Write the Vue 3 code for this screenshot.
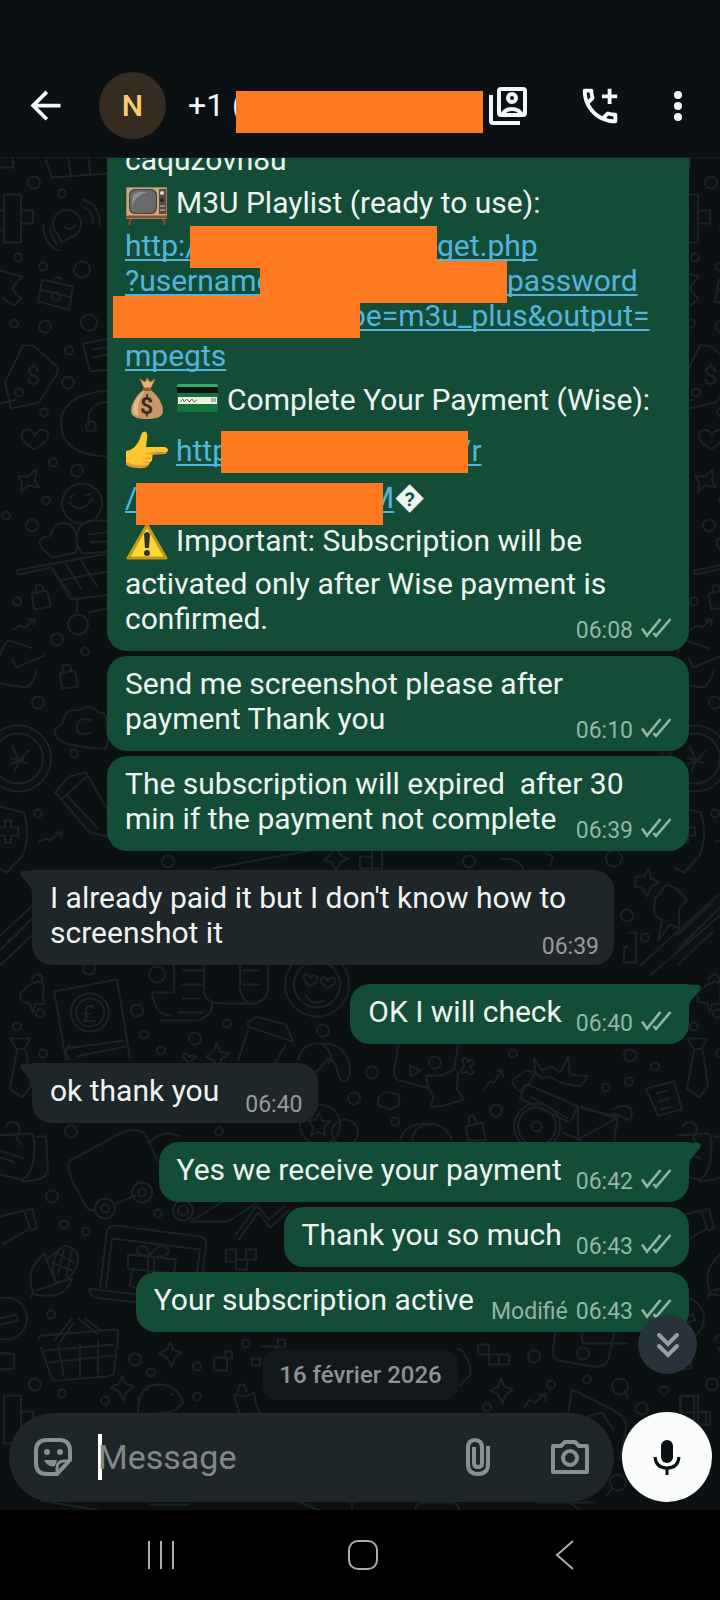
<template>
  <div class="app">
    <header class="topbar">
      <button class="icon-btn back" type="button" aria-label="Retour">
        <svg width="45" height="45" viewBox="0 0 24 24" fill="currentColor">
          <path d="M20 11H7.8l5.6-5.6L12 4l-8 8 8 8 1.4-1.4L7.8 13H20z" />
        </svg>
      </button>
      <div class="avatar">N</div>
      <div class="contact">
        <span class="contact-name" :style="{ width: '48px' }">+1 (</span>
        <span class="redact low"></span>
      </div>
      <div class="actions">
        <button class="icon-btn" type="button" aria-label="Contact">
          <svg width="46" height="46" viewBox="0 0 46 46" fill="none" stroke="currentColor" stroke-width="4">
            <rect x="14" y="6" width="26" height="26" rx="2" />
            <path d="M6 12v26q0 2 2 2h27" />
            <circle cx="27" cy="15" r="4" />
            <path d="M17 32q3-6 10-6t10 6" />
          </svg>
        </button>
        <button class="icon-btn" type="button" aria-label="Appeler">
          <svg width="46" height="46" viewBox="0 0 24 24" fill="currentColor">
            <path d="M6.54 5c.06.89.21 1.76.45 2.59l-1.2 1.2c-.41-1.2-.67-2.47-.76-3.79h1.51m9.86 12.02c.85.24 1.72.39 2.6.45v1.49c-1.32-.09-2.59-.35-3.8-.75l1.2-1.19M7.5 3H4c-.55 0-1 .45-1 1 0 9.39 7.61 17 17 17 .55 0 1-.45 1-1v-3.49c0-.55-.45-1-1-1-1.24 0-2.45-.2-3.57-.57-.1-.04-.21-.05-.31-.05-.26 0-.51.1-.71.29l-2.2 2.2c-2.83-1.45-5.15-3.76-6.59-6.59l2.2-2.2c.28-.28.36-.67.25-1.02C8.7 6.45 8.5 5.25 8.5 4c0-.55-.45-1-1-1z" />
            <path d="M16 3h2v3h3v2h-3v3h-2V8h-3V6h3z" />
          </svg>
        </button>
        <button class="icon-btn" type="button" aria-label="Menu">
          <svg width="18" height="46" viewBox="0 0 18 46" fill="currentColor">
            <circle cx="9" cy="12" r="4" />
            <circle cx="9" cy="23" r="4" />
            <circle cx="9" cy="34" r="4" />
          </svg>
        </button>
      </div>
    </header>

    <div class="chat">
      <svg class="wallpaper" viewBox="0 157 720 1353" preserveAspectRatio="xMidYMid slice" aria-hidden="true">
        <g id="doodles">
          <path d="M45 157l7 20 56-4M68 157l3 19M88 157l3 18M0 167h13v-10" />
          <path d="M4 194h17v48H4zM21 210h12v13H21zM4 230h-8M4 210h-8" />
          <path d="M61 242l-3-8a14 14 0 1 1 12 3zM43 224q2 24 18 26M50 226q2 14 8 19M82 199q18 4 18 26M84 207q9 4 9 16M64 226q6 6 12-2" />
          <path d="M42 279l31 7-4 23-31-8zM40 289l31 8M53 280q2-6 9-1" />
          <circle cx="56" cy="296" r="4" />
          <path d="M0 270l22 6-10 12 9 10-7 7-12-8" />
          <path d="M23 345l10 0 25 22-1 6-18 29-28 6-6-26zM0 403l17-4" />
          <circle cx="19" cy="392" r="4" />
          <path d="M110 338l-27 5 7 28 20-2M92 349l14-2M93 357l14-3M108 390q-48 4-47 34t45 32M110 401q-26 2-21 24" />
          <circle cx="91" cy="426" r="5" />
          <path d="M34 449q-18-12-10-19 7-3 11 5 5-9 12-4 6 6-13 18z" />
          <path d="M18 476l10 0 8-7-1 11 4 7-11-2-7 6 1-9z" />
          <circle cx="82" cy="503" r="20" />
          <path d="M69 501q10 15 24-3M70 498l4-4M84 495l8-2" />
          <path d="M53 557q-26-18-2-22 2-15 17-12 12 6 8 29zM110 520h-20q-16 4-13 24l5 9 28-2M88 534l18-2M90 542l17-1" />
          <path d="M16 570l92-17M16 570l2 4 33-7 20 32 40-5M51 567l20 27M65 562l17 27M81 560l16 26M58 580l50-9M77 600v13M88 612l22-5" />
          <circle cx="78" cy="624" r="10" />
          <path d="M32 593l15-3 4 16-17 3zM36 592q-2-7 3-8 5 1 4 6M12 630l8-5 5 2 9-8M28 619h7l-1 6" />
          <path d="M33 648l-24-8q-6 3-9 15M45 655l-29 12-4-9M0 683l25 4q7-1 12-17" />
          <path d="M60 673l15-3 3 16-16 2zM63 672q-2-8 4-8 5 1 4 6" />
          <path d="M63 742q-16-10 0-20 2-16 16-12 10-8 20 2 8 0 7 8l2 20-2 8q-22 0-43-6zM92 720q-14-5-15 6t14 6" />
          <circle cx="18" cy="758" r="33" />
          <circle cx="18" cy="758" r="25" />
          <path d="M12 745l7 15 11-11M19 760l-5 12M10 757l18 6M10 764l14-6" />
          <path d="M55 792l14-16 17-4 22 38v26l-18-4zM60 800l28-25M66 794l32 34" />
          <path d="M0 806l24 6q7 24-2 44l-15 16-10-5M0 827h5v-7h6v7h7v8h-7v7H5v-7H0" />
          <path d="M38 842l8-4 4 2 10-8M55 832h7l-1 6" />
          <path d="M82 871l10 7M75 900v-12l14 3" />
          <circle cx="34" cy="182" r="6" />
          <circle cx="62" cy="193" r="4" />
          <circle cx="18" cy="257" r="4" />
          <circle cx="43" cy="266" r="4" />
          <circle cx="82" cy="269" r="8" />
          <circle cx="14" cy="323" r="4" />
          <circle cx="45" cy="326" r="6" />
          <circle cx="89" cy="322" r="8" />
          <circle cx="69" cy="350" r="4" />
          <circle cx="68" cy="382" r="6" />
          <circle cx="44" cy="412" r="4" />
          <circle cx="77" cy="470" r="6" />
          <circle cx="53" cy="462" r="4" />
          <circle cx="46" cy="500" r="4" />
          <circle cx="32" cy="525" r="6" />
          <circle cx="6" cy="515" r="4" />
          <circle cx="17" cy="601" r="4" />
          <circle cx="57" cy="639" r="6" />
          <circle cx="85" cy="651" r="4" />
          <circle cx="38" cy="702" r="6" />
          <circle cx="74" cy="753" r="4" />
          <circle cx="38" cy="813" r="4" />
          <path d="M0 935l35-32M0 950l80-80M0 965l36-34M8 938l2 4M14 932l3 4M20 926l3 4" />
          <path d="M20 993l10-9 8-3 6 3-1 12 1 7-9 1-2 8-3-9-9-2zM32 981q0-8 8-7 4 4 1 9" />
          <path d="M10 1038h20l-5 10-8 1zM17 1050l-7 38 12 9 9-11-5-36" />
          <path d="M54 991l63-12 13 79M54 991q0-3 12 69M66 1048l58-8M70 1060q-8-8 0-16M76 1056l50-10" />
          <circle cx="90" cy="1012" r="19" />
          <circle cx="90" cy="1012" r="14" />
          <path d="M152 992h22v-28M152 992q4 26 20 22M160 1020h38q16-6 14-18M182 970h22M182 984h20M182 998h18M178 1012h26M204 964v28q2 11 20 11h30q14-4 14-14v-25M240 964v24q2 14 14 16M242 970h18M242 984h18" />
          <circle cx="317" cy="984" r="32" />
          <circle cx="317" cy="984" r="23" />
          <path d="M310 986q-10-9-5-12 4-1 5 4 3-5 7-2 2 4-7 10zM328 988q-10-6-6-11 4-1 6 4 3-6 7-3 2 5-7 10zM305 994q6 12 20 6" />
          <path d="M248 1022l8-6 30 8 7 17-45-15zM248 1030l-10 30M286 1044l-12 20" />
          <path d="M216 1042l4 9 9 2-8 6-2 10-5-9-8-4 8-5zM188 1062q-8-8-3-9 4 0 4 4 4-4 7 0z" />
          <path d="M298 1060q4-18 22-17 30-2 30 31-6 14-12 0-2-14-10-16l-12 14-16-5M322 1043q14 12 6 20" />
          <circle cx="89" cy="968" r="6" />
          <circle cx="157" cy="974" r="8" />
          <circle cx="137" cy="1010" r="6" />
          <circle cx="40" cy="1013" r="4" />
          <circle cx="17" cy="1026" r="4" />
          <circle cx="144" cy="1034" r="4" />
          <circle cx="195" cy="1038" r="6" />
          <circle cx="161" cy="1050" r="4" />
          <circle cx="227" cy="1023" r="4" />
          <circle cx="323" cy="1030" r="6" />
          <circle cx="43" cy="1053" r="4" />
          <path d="M0 1135l30-2q6 0 4 22-2 20-12 24l-22-5M36 1136l10 0 2 36q-4 8-26 9M0 1150l24 8M0 1157l15 5M5 1127q4-8 12-4 6 6-1 14l6 8" />
          <path d="M70 1160l50-27q18-8 26 2l12 26M70 1160q-4 4 2 20l14 26q4 6 10 2M116 1203l20-8M150 1142q12-14 30-6" />
          <circle cx="105" cy="1208" r="10" />
          <circle cx="105" cy="1208" r="4" />
          <circle cx="142" cy="1192" r="10" />
          <circle cx="142" cy="1192" r="4" />
          <circle cx="183" cy="1210" r="10" />
          <circle cx="183" cy="1210" r="5" />
          <path d="M190 1221h38l28-18M238 1240l20-28 12 15 20-18M235 1235l22-30 12 14 16-14M192 1220l36-22" />
          <path d="M100 1288l7-58q2-5 8-5l86 11q6 2 5 8l-4 36M106 1288l6-50 88 11-4 30M88 1288l50 6M88 1288l5 9 45 5M128 1254l48 5-2 14-46-5zM132 1269l-2 16 10 4M148 1256v20M154 1257v18M150 1255q-16 0-12-8 8-5 12 8 8-14 18-7 4 8-12 8" />
          <path d="M34 1294q-8-20 2-32l8-9 12 29 16-4q-6 22-36 16zM30 1298l4-8M56 1282q-8-22 6-36M36 1290l36-12M48 1258l16-13q14 2 14 14-2 14-12 20M52 1262l20 8M56 1252l18 10M64 1248l-6 26M72 1250l-6 26" />
          <path d="M38 1340q0-5 5-5l71-6q5 0 4 6l-4 36q-1 4-7 5l-50 4q-4 0-6-4l-10-30M44 1350l70-6M48 1362l66-7M58 1344l6 32M80 1342v36M98 1340v34M54 1340l18-22M60 1342l14-20M78 1318l20 16M84 1317l18 14" />
          <circle cx="6" cy="1318" r="21" />
          <path d="M0 1318l16-4 2 6-18 4M0 1352l14 2v14l-14 1M0 1216l24-6 6 18-28 16M26 1210l6-2 5 20-6 2" />
          <path d="M170 1341l3 8 9 3-8 6-2 8-5-9-8-4 8-4zM122 1375l3 8 9 3-8 6-2 8-5-9-8-4 8-4z" />
          <path d="M226 1249h10v12h-10zM246 1249h10v10h-10zM236 1259h11v10h-11zM214 1357h13v13h-13zM225 1351h7v7h-7zM252 1358h8v7h-8zM260 1346h16v12M278 1339h7v8h-7z" />
          <path d="M4 1395h17v48H4zM21 1411h12v13H21z" />
          <path d="M138 1412q0-30 24-28 16 2 21 18-8 12-24 10M170 1394h4M141 1400l-4-4M148 1390l-2-5" />
          <path d="M234 1394l12 2 8-4 2 12 4 8-20 4zM238 1392q0-10 6-8l3 8" />
          <circle cx="71" cy="1131" r="6" />
          <circle cx="219" cy="1131" r="4" />
          <circle cx="52" cy="1196" r="6" />
          <circle cx="64" cy="1224" r="4" />
          <circle cx="86" cy="1231" r="4" />
          <circle cx="158" cy="1213" r="4" />
          <circle cx="51" cy="1314" r="4" />
          <circle cx="135" cy="1359" r="6" />
          <circle cx="151" cy="1372" r="4" />
          <circle cx="197" cy="1366" r="4" />
          <circle cx="246" cy="1343" r="4" />
          <circle cx="35" cy="1384" r="6" />
          <circle cx="62" cy="1393" r="4" />
          <circle cx="105" cy="1400" r="4" />
          <circle cx="197" cy="1396" r="4" />
        </g>
        <text x="26" y="384" font-size="26">$</text>
        <text x="82" y="1021" font-size="24">£</text>
        <use href="#doodles" x="677" />
        <text x="703" y="384" font-size="26">$</text>
        <path d="M208 944l64-34 60 8M212 868l98-18M330 854l6-8 4 8 8 4-8 4-4 8-4-8-8-2zM360 856h12v12h-12zM372 846h10v22h-10zM500 858q20 0 24 12M545 852l8 4-3 10M636 876l8 0 5-8 2 10 8 4-8 4-4 10-4-8-8-2z" />
        <path d="M655 898l12-14 10 4 10 12-8 8 0 20-9-4-12 16 4-20-8-6z" />
        <path d="M640 965l80-72M650 975l70-60M628 932h8v30h-12v-16h4" />
        <path d="M398 1045l-4 26q0 8 6 9l30 8M458 1045l-4 24-12 6-16 0 2 12 6 8-4 12 14-2 20-6-7-10 1-18M410 1065l10 5-9 6z" />
        <path d="M462 1059q4-4 6 2 6-4 6 2l-4 3 4 6q-4 4-7-1-4 4-6-1l3-5zM484 1089l6-8 4 1 8-13M496 1071l6-2 1 8" />
        <path d="M378 1097l8-6 12 3 2 10-10 5-12-4zM400 1140q4-18 30-17 18 2 22 17M412 1140q2-16 20-16" />
        <path d="M512 1080l14-10 10 2-8 12-8 7q-6-4-8-11zM528 1084l50 22-8 16-50-24 4-12zM535 1072l-1-14 8 12 10-4 8 6 8-16 2 18 18 2-8 10-20-4-10-6-8 2z" />
        <path d="M530 1096l38 22M580 1106l36 12-36 20M578 1106v34M582 1108l36 8-4 24M612 1110l6-4q14-2 14 6l-2 8-18-8M562 1132l20 8" />
        <circle cx="537" cy="1126" r="23" />
        <circle cx="537" cy="1126" r="19" />
        <circle cx="537" cy="1126" r="5" />
        <path d="M646 1088l28-7 8 28-24 6zM656 1093l12-3M658 1101l12-3M660 1109l12-3M466 1126l16-4 4 18h-18zM470 1124q-4-10 4-8l3 7" />
        <circle cx="320" cy="1124" r="20" />
        <circle cx="345" cy="1132" r="13" />
        <path d="M319 1112l3 8 8 1-6 6 1 8-7-4-7 4 2-9-5-6 8-1z" />
        <path d="M478 1344h11v10h-11zM489 1354h10v10h-10zM499 1354h10v10h-10zM457 1348q6 0 12 14l2 12-12 12M555 1333l-2 18q0 8 6 9l34 6q14 2 16-10l5-23M582 1333v6q0 4 6 4h40" />
        <path d="M501 1378l3 8 9 3-8 6-2 8-5-9-8-4 8-4zM524 1407l6-8 5 3 10-9M538 1394h8l-1 7M568 1414l4-25 40 20q16 8 14 20l-6 30M580 1418l22-6 12 18M624 1390l4 8M680 1396h14v16h-14zM694 1412h12v12h-12z" />
        <circle cx="583" cy="1353" r="6" />
        <circle cx="534" cy="1356" r="6" />
        <circle cx="551" cy="1384" r="4" />
        <circle cx="587" cy="1379" r="4" />
        <circle cx="620" cy="1386" r="8" />
        <circle cx="664" cy="1390" r="4" />
        <circle cx="642" cy="1408" r="6" />
        <circle cx="487" cy="1407" r="4" />
        <circle cx="435" cy="1062" r="6" />
        <circle cx="372" cy="1072" r="6" />
        <circle cx="354" cy="1098" r="6" />
        <circle cx="513" cy="1053" r="4" />
        <circle cx="496" cy="1110" r="6" />
        <circle cx="395" cy="1121" r="4" />
        <circle cx="630" cy="1055" r="6" />
        <circle cx="606" cy="1087" r="4" />
        <circle cx="629" cy="1081" r="4" />
        <circle cx="655" cy="1066" r="4" />
        <circle cx="614" cy="858" r="8" />
        <circle cx="627" cy="915" r="6" />
        <circle cx="645" cy="937" r="4" />
        <circle cx="168" cy="861" r="6" />
        <circle cx="469" cy="861" r="6" />
        <circle cx="618" cy="1482" r="8" />
        <path d="M612 1488l-6 8M570 1502l10 8M536 1502h60M40 1500l60 10M150 1504h40M300 1502l20 8M352 1500v10M415 1510q0-8 10-8h26q8 0 8 8" />
      </svg>

      <main class="messages">
        <article
          v-for="msg in messages"
          :key="msg.id"
          class="bubble"
          :class="[msg.from, { wide: msg.wide, first: msg.tail, edited: msg.edited }]"
        >
          <svg v-if="msg.tail" class="tail" width="13" height="24" viewBox="0 0 14 24" fill="currentColor">
            <path d="M0 0h10q4 1 2 5L3 16Q0 19 0 24z" />
          </svg>
          <div v-for="(line, i) in msg.lines" :key="i" class="line" :class="line.size">
            <template v-for="(part, j) in line.parts" :key="j">
              <span v-if="part.redact" class="redact" :class="{ low: part.low }" :style="{ marginLeft: part.shift + 'px' }"></span>
              <a v-else-if="part.link" href="#" class="link" :style="linkStyle(part)">{{ part.link }}</a>
              <svg v-else-if="part.emoji" class="emoji" width="44" height="44" viewBox="0 0 44 44" role="img" :aria-label="part.emoji">
                <template v-if="part.emoji === 'tv'">
                  <path d="M6 37l-2 7M38 37l2 7" stroke="#8a4b32" stroke-width="2" />
                  <rect x="1" y="6" width="41" height="32" rx="1" fill="#a87b58" />
                  <rect x="2" y="7" width="39" height="27" fill="#c9a982" />
                  <rect x="4" y="8" width="28" height="25" rx="6" fill="#3e4242" />
                  <rect x="5" y="9" width="26" height="23" rx="6" fill="#686b6a" />
                  <path d="M7 20q0-9 9-9h6q-11 3-15 14z" fill="#8f918f" />
                  <rect x="34" y="8" width="7" height="25" fill="#594c40" />
                  <circle cx="37" cy="12" r="2" fill="#ddd" />
                  <circle cx="37" cy="19" r="2" fill="#222" />
                  <path d="M35 25h5M35 29h5" stroke="#d7c6ac" />
                  <path d="M1 36h41" stroke="#8b4f30" stroke-width="2" />
                </template>
                <template v-else-if="part.emoji === 'money'">
                  <path d="M15 2l5 3 2-4 3 4 5-3-4 9h-7z" fill="#e2b578" stroke="#9a6634" />
                  <path d="M19 12h6q13 11 13 22 0 8-16 8T6 34q0-11 13-22z" fill="#c99665" />
                  <path d="M18 14q-10 9-10 20 0 4 5 5-2-14 7-25z" fill="#e3b98a" />
                  <path d="M18 11h8v3h-8z" fill="#8e5c33" />
                  <text x="15" y="37" font-size="23" font-weight="700" fill="#3b2b20">$</text>
                </template>
                <template v-else-if="part.emoji === 'card'">
                  <rect x="1" y="7" width="41" height="28" rx="2" fill="#14723f" />
                  <path d="M1 9q0-2 2-2h37q2 0 2 2v2H1z" fill="#3da66b" />
                  <path d="M1 10h41v6H1z" fill="#06180f" />
                  <path d="M2 20h39v7H2z" fill="#edf0df" />
                  <path d="M4 25l3-3 1 3 3-3 2 3 3-3 2 3 3-2M35 22h5M35 24h5" fill="none" stroke="#6f716b" />
                </template>
                <template v-else-if="part.emoji === 'hand'">
                  <path d="M1 22q7-1 11-7 3-4 4-9 2-5 5-3 2 2 1 7l-1 8h19q3 1 3 3t-3 2l-14 1q3 2 1 5 1 3-2 4-1 5-6 5-10 1-18-3z" fill="#fdc72f" />
                  <path d="M26 24l14-1q2 0 2-2 1 4-3 4l-13 1zM19 29q4 1 7 0M18 33q4 1 6 0M1 33q10 4 18 3 3 0 4-2 0 5-5 5-10 1-17-3z" fill="#e8942c" />
                  <path d="M20 24q3 1 6 0M19 29q4 1 7 0M18 33q4 1 6 0" fill="none" stroke="#e8942c" />
                </template>
                <template v-else>
                  <path d="M22 6l19 33H3z" fill="#fdd835" stroke="#c29817" stroke-width="3" stroke-linejoin="round" />
                  <path d="M19 15q3-4 6 0l-1 14h-4z" fill="#333025" />
                  <circle cx="22" cy="34" r="3" fill="#333025" />
                </template>
              </svg>
              <span v-else class="text">{{ part.text }}</span>
            </template>
            <span v-if="i === msg.lines.length - 1" class="meta">
              <span v-if="msg.edited">Modifié</span>
              <time>{{ msg.time }}</time>
              <svg v-if="msg.from === 'out'" class="ticks" width="31" height="20" viewBox="0 0 31 20" fill="none" stroke="currentColor" stroke-width="2.6">
                <path d="M1 10.5l5 7L19.5 1M12.5 15l2.5 3L29.5 1" />
              </svg>
            </span>
          </div>
        </article>
        <div class="date-chip">16 février 2026</div>
        <button class="scroll-down" type="button" aria-label="Aller en bas">
          <svg width="30" height="30" viewBox="0 0 30 30" fill="none" stroke="currentColor" stroke-width="4" stroke-linecap="round">
            <path d="M6 5l9 9 9-9M6 16l9 9 9-9" />
          </svg>
        </button>
      </main>

      <form class="composer" @submit.prevent>
        <div class="field">
          <button class="icon-btn" type="button" aria-label="Autocollants">
            <svg width="38" height="38" viewBox="0 0 38 38" fill="none" stroke="currentColor" stroke-width="4">
              <path d="M13 2h12q11 0 11 11v9L23 36H13Q2 36 2 25V13Q2 2 13 2z" />
              <path d="M23 35v-5q0-7 7-7h5" stroke-width="3" />
              <path d="M10 22q4 8 11 6l2-6z" fill="currentColor" stroke="none" />
              <circle cx="13" cy="14" r="3" fill="currentColor" stroke="none" />
              <circle cx="26" cy="14" r="3" fill="currentColor" stroke="none" />
            </svg>
          </button>
          <span class="caret"></span>
          <input v-model="draft" type="text" placeholder="Message" aria-label="Message" />
          <button class="icon-btn" type="button" aria-label="Joindre">
            <svg width="36" height="38" viewBox="0 0 36 38" fill="none" stroke="currentColor" stroke-width="4">
              <path d="M28 8v18q0 10-10 10T8 26V10q0-8 7-8t7 8v15q0 4-4 4t-4-4V9" />
            </svg>
          </button>
          <button class="icon-btn" type="button" aria-label="Appareil photo">
            <svg width="38" height="38" viewBox="0 0 38 38" fill="none" stroke="currentColor" stroke-width="4" stroke-linejoin="round">
              <path d="M2 8h8l4-4h10l4 4h8v26H2z" />
              <circle cx="19" cy="20" r="7" />
            </svg>
          </button>
        </div>
        <button class="mic" type="button" aria-label="Message vocal">
          <svg width="30" height="38" viewBox="0 0 30 38" fill="none" stroke="currentColor" stroke-width="3">
            <rect x="9" y="2" width="12" height="23" rx="6" fill="currentColor" stroke="none" />
            <path d="M3 19q1 11 12 11t12-11M15 30v7" />
          </svg>
        </button>
      </form>
    </div>

    <nav class="navbar">
      <button class="icon-btn" type="button" aria-label="Applications récentes">
        <svg width="30" height="30" viewBox="0 0 30 30" stroke="currentColor" stroke-width="2">
          <path d="M3 1v28M15 1v28M27 1v28" />
        </svg>
      </button>
      <button class="icon-btn" type="button" aria-label="Accueil">
        <svg width="30" height="30" viewBox="0 0 30 30" fill="none" stroke="currentColor" stroke-width="2">
          <rect x="1" y="1" width="28" height="28" rx="9" />
        </svg>
      </button>
      <button class="icon-btn" type="button" aria-label="Précédent">
        <svg width="30" height="30" viewBox="0 0 30 30" fill="none" stroke="currentColor" stroke-width="2">
          <path d="M23 1L7 15l16 14" />
        </svg>
      </button>
    </nav>
  </div>
</template>

<script setup>
import { ref } from 'vue'

const draft = ref('')

// Plain messages only need their text, one entry per line
const plain = (...texts) => texts.map(text => ({ parts: [{ text }] }))

const messages = [
  {
    id: 1,
    from: 'out',
    wide: true,
    time: '06:08',
    lines: [
      { parts: [{ text: 'caquzovn8u' }] },
      { size: 'tall', parts: [{ emoji: 'tv' }, { text: 'M3U Playlist (ready to use):' }] },
      { parts: [{ link: 'http:/', width: 65 }, { redact: true, shift: 0 }, { link: 'get.php' }] },
      { parts: [{ link: '?username', width: 135 }, { redact: true, shift: 0 }, { link: 'password' }] },
      { parts: [{ redact: true, shift: -12 }, { link: 'pe=m3u_plus&output=', tuck: 11 }] },
      { size: 'medium', parts: [{ link: 'mpegts' }] },
      { size: 'medium', parts: [{ emoji: 'money' }, { emoji: 'card' }, { text: 'Complete Your Payment (Wise):' }] },
      {
        size: 'extra',
        parts: [{ emoji: 'hand' }, { link: 'http', width: 45 }, { redact: true, shift: 0 }, { link: '/r', tuck: 9 }]
      },
      { parts: [{ link: '/', width: 11 }, { redact: true, low: true, shift: 0 }, { link: 'M', tuck: 15 }, { text: '\uFFFD' }] },
      { size: 'tall', parts: [{ emoji: 'warning' }, { text: 'Important: Subscription will be' }] },
      ...plain('activated only after Wise payment is', 'confirmed.')
    ]
  },
  { id: 2, from: 'out', wide: true, time: '06:10', lines: plain('Send me screenshot please after', 'payment Thank you') },
  { id: 3, from: 'out', wide: true, time: '06:39', lines: plain('The subscription will expired  after 30', 'min if the payment not complete') },
  { id: 4, from: 'in', wide: true, tail: true, time: '06:39', lines: plain("I already paid it but I don't know how to", 'screenshot it') },
  { id: 5, from: 'out', tail: true, time: '06:40', lines: plain('OK I will check') },
  { id: 6, from: 'in', tail: true, time: '06:40', lines: plain('ok thank you') },
  { id: 7, from: 'out', tail: true, time: '06:42', lines: plain('Yes we receive your payment') },
  { id: 8, from: 'out', time: '06:43', lines: plain('Thank you so much') },
  { id: 9, from: 'out', edited: true, time: '06:43', lines: plain('Your subscription active') }
]

function linkStyle(part) {
  return {
    width: part.width ? part.width + 'px' : 'auto',
    marginLeft: part.tuck ? -part.tuck + 'px' : '0'
  }
}
</script>

<style>
body {
  margin: 0;
  background: #000;
}
</style>

<style scoped>
.app {
  display: flex;
  flex-direction: column;
  height: 100vh;
  font-family: Roboto, 'Noto Sans', sans-serif;
  font-size: 30px;
  line-height: 35px;
  color: #eef4f1;
  background: #0b1013;
}

.icon-btn {
  display: flex;
  flex: none;
  padding: 0;
  border: 0;
  background: none;
  color: inherit;
}

.topbar {
  display: flex;
  align-items: center;
  padding: 54px 33px 0 23px;
  height: 103px;
  border-bottom: 1px solid #171c1f;
  background: #0b1013;
  color: #f5f8f9;
}

.avatar {
  flex: none;
  width: 67px;
  height: 67px;
  margin: 0 22px 0 31px;
  border-radius: 50%;
  background: #352b20;
  color: #fcce74;
  font-weight: 500;
  line-height: 67px;
  text-align: center;
}

.contact {
  display: flex;
  flex: 1;
  align-items: center;
  min-width: 0;
  font-size: 32px;
}

.contact-name {
  white-space: nowrap;
}

.actions {
  display: flex;
  gap: 46px;
}

.redact {
  position: relative;
  z-index: 1;
  flex: none;
  width: 247px;
  height: 42px;
  margin-top: 2px;
  background: #ff7920;
}

.redact.low {
  margin-top: 13px;
}

.chat {
  position: relative;
  display: flex;
  flex: 1;
  flex-direction: column;
  min-height: 0;
  overflow: hidden;
}

.wallpaper {
  position: absolute;
  inset: 0;
  width: 100%;
  height: 100%;
  fill: none;
  stroke: #1b2225;
  stroke-width: 2;
  stroke-linejoin: round;
}

.wallpaper text {
  fill: #1b2225;
  stroke: none;
}

.messages {
  position: relative;
  display: flex;
  flex: 1;
  flex-direction: column;
  justify-content: flex-end;
  min-height: 0;
  padding: 0 31px 0 32px;
}

.bubble {
  position: relative;
  flex: none;
  box-sizing: border-box;
  margin-top: 5px;
  padding: 10px 17px 15px 18px;
  border-radius: 20px;
}

.bubble.wide {
  width: calc(100% - 75px);
}

.bubble.first {
  margin-top: 19px;
}

.bubble.out {
  align-self: flex-end;
  background: #144d37;
}

.bubble.in {
  align-self: flex-start;
  padding-right: 15px;
  background: #1f2629;
}

.out.first {
  border-top-right-radius: 0;
}

.in.first {
  border-top-left-radius: 0;
}

.tail {
  position: absolute;
  top: 0;
}

.out .tail {
  left: 100%;
  color: #144d37;
}

.in .tail {
  right: 100%;
  color: #1f2629;
  transform: scaleX(-1);
}

.line {
  display: flex;
  align-items: center;
  height: 35px;
  white-space: pre;
}

.line.medium {
  height: 44px;
}

.line.tall {
  height: 51px;
}

.line.extra {
  height: 59px;
}

.emoji {
  flex: none;
  margin-right: 7px;
}

.link {
  flex: none;
  color: #53b5dc;
  text-decoration: underline;
  text-decoration-thickness: 2px;
  text-underline-offset: 3px;
  text-decoration-skip-ink: none;
}

.meta {
  display: flex;
  align-items: center;
  gap: 8px;
  margin-top: 23px;
  margin-left: auto;
  padding-left: 14px;
  color: #93b5a6;
  font-size: 23px;
}

.edited .meta {
  padding-left: 17px;
}

.in .meta {
  margin-top: 27px;
  padding-left: 26px;
  color: #969b9e;
}

.ticks {
  margin-bottom: 4px;
}

.date-chip {
  align-self: center;
  flex: none;
  margin-top: 18px;
  padding: 0 16px;
  border-radius: 14px;
  background: #12181b;
  color: #8c9295;
  font-size: 24px;
  font-weight: 500;
  line-height: 50px;
}

.scroll-down {
  position: absolute;
  right: 23px;
  bottom: 26px;
  display: flex;
  align-items: center;
  justify-content: center;
  width: 59px;
  height: 59px;
  padding: 0;
  border: 0;
  border-radius: 50%;
  background: #28323b;
  color: #94a0a8;
}

.composer {
  position: relative;
  display: flex;
  align-items: center;
  gap: 8px;
  padding: 12px 8px 8px 9px;
}

.field {
  display: flex;
  flex: 1;
  align-items: center;
  min-width: 0;
  height: 89px;
  box-sizing: border-box;
  padding: 0 25px;
  border-radius: 45px;
  background: #1f2629;
  color: #899093;
}

.caret {
  flex: none;
  width: 4px;
  height: 46px;
  margin: 0 -4px 0 26px;
  background: #fff;
}

.field input {
  flex: 1;
  min-width: 0;
  padding: 0;
  border: 0;
  outline: 0;
  background: none;
  color: #eef4f1;
  font-family: inherit;
  font-size: 34px;
}

.field input::placeholder {
  color: #81888b;
  opacity: 1;
}

.field .icon-btn:last-child {
  margin-left: 55px;
}

.mic {
  display: flex;
  flex: none;
  align-items: center;
  justify-content: center;
  width: 90px;
  height: 90px;
  padding: 0;
  border: 0;
  border-radius: 50%;
  background: #fbfcfc;
  color: #0b1013;
}

.navbar {
  display: grid;
  grid-template-columns: repeat(3, 1fr);
  align-items: center;
  justify-items: center;
  height: 90px;
  padding: 0 54px 0 60px;
  background: #000;
  color: #adadad;
}
</style>
